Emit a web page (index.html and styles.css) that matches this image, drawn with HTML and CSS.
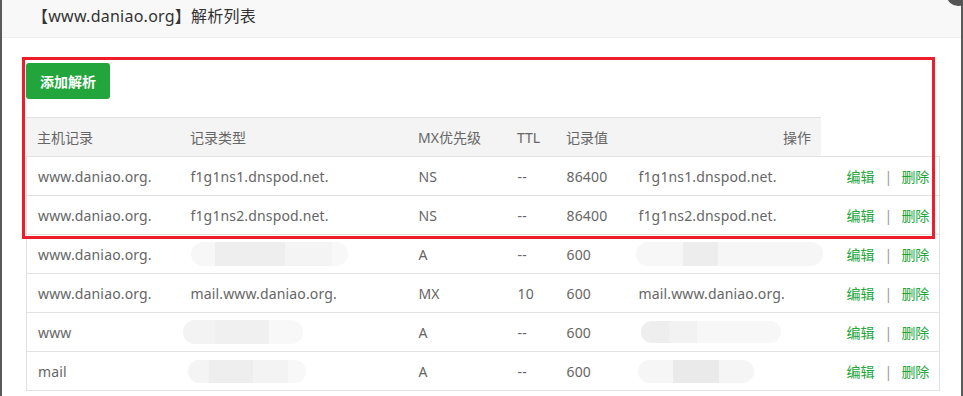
FILE: index.html
```html
<!DOCTYPE html>
<html lang="zh-CN">
<head>
<meta charset="utf-8">
<title>解析列表</title>
<link rel="stylesheet" href="styles.css">
</head>
<body>
<div class="backdrop">
  <div class="modal">
    <div class="modal-head">【www.daniao.org】解析列表</div>
    <div class="modal-body">
      <button class="btn-add">添加解析</button>
      <table class="thead-table">
        <colgroup><col class="c1"><col class="c2"><col class="c3"><col class="c4"><col class="c5h"><col class="c6h"></colgroup>
        <tr><th>主机记录</th><th>记录类型</th><th>MX优先级</th><th>TTL</th><th>记录值</th><th class="right">操作</th></tr>
      </table>
      <table class="tbody-table">
        <colgroup><col class="c1"><col class="c2"><col class="c3"><col class="c4"><col class="c5"><col class="c6"><col class="c7"></colgroup>
        <tr><td>www.daniao.org.</td><td>f1g1ns1.dnspod.net.</td><td>NS</td><td>--</td><td>86400</td><td>f1g1ns1.dnspod.net.</td><td class="ops"><a>编辑</a><span class="sep">|</span><a>删除</a></td></tr>
        <tr><td>www.daniao.org.</td><td>f1g1ns2.dnspod.net.</td><td>NS</td><td>--</td><td>86400</td><td>f1g1ns2.dnspod.net.</td><td class="ops"><a>编辑</a><span class="sep">|</span><a>删除</a></td></tr>
        <tr><td>www.daniao.org.</td><td><span class="blur b1"></span></td><td>A</td><td>--</td><td>600</td><td><span class="blur b2"></span></td><td class="ops"><a>编辑</a><span class="sep">|</span><a>删除</a></td></tr>
        <tr><td>www.daniao.org.</td><td>mail.www.daniao.org.</td><td>MX</td><td>10</td><td>600</td><td>mail.www.daniao.org.</td><td class="ops"><a>编辑</a><span class="sep">|</span><a>删除</a></td></tr>
        <tr><td>www</td><td><span class="blur b3"></span></td><td>A</td><td>--</td><td>600</td><td><span class="blur b4"></span></td><td class="ops"><a>编辑</a><span class="sep">|</span><a>删除</a></td></tr>
        <tr><td>mail</td><td><span class="blur b5"></span></td><td>A</td><td>--</td><td>600</td><td><span class="blur b6"></span></td><td class="ops"><a>编辑</a><span class="sep">|</span><a>删除</a></td></tr>
      </table>
    </div>
    <div class="highlight"></div>
  </div>
  <div class="close-dot"></div>
</div>
</body>
</html>
```
FILE: styles.css
```css
html, body {
  margin: 0;
  padding: 0;
  background: #5a5a5a;
  overflow: hidden;
}
body {
  font-family: "Noto Sans", "Noto Sans CJK SC", sans-serif;
  color: #666;
}
.backdrop {
  position: relative;
  width: 963px;
  height: 396px;
  padding-left: 2px;
  box-sizing: border-box;
}
.modal {
  position: relative;
  width: 959px;
  height: 396px;
  background: #fff;
}
.modal-head {
  height: 38px;
  box-sizing: border-box;
  background: #f8f8f8;
  border-bottom: 1px solid #eee;
  padding: 4px 0 0 30px;
  font-size: 16px;
  line-height: 24px;
  letter-spacing: 0.25px;
  color: #333;
}
.modal-body {
  padding: 25px 0 0 24px;
}
.btn-add {
  display: block;
  width: 84px;
  height: 36px;
  border: 0;
  border-radius: 3px;
  background: #22a63b;
  color: #fff;
  font-family: inherit;
  font-size: 14px;
  font-weight: bold;
  padding: 0;
  margin: 0 0 18px 0;
}
table {
  border-collapse: collapse;
  table-layout: fixed;
  font-size: 14px;
}
.thead-table {
  width: 795px;
  background: #f4f4f4;
  border-top: 1px solid #e2e2e2;
}
.thead-table th {
  font-weight: normal;
  text-align: left;
  height: 38px;
  padding: 0 0 0 11px;
  color: #666;
}
.thead-table th.right {
  text-align: right;
  padding-right: 10px;
}
.tbody-table {
  width: 913px;
  border: 1px solid #e2e2e2;
}
.tbody-table td {
  height: 38px;
  padding: 0 0 0 11px;
  border-top: 1px solid #e2e2e2;
  white-space: nowrap;
  overflow: visible;
  color: #666;
  letter-spacing: 0.15px;
}
col.c1 { width: 153px; }
col.c2 { width: 228px; }
col.c3 { width: 99px; }
col.c4 { width: 49px; }
col.c5 { width: 72px; }
col.c5h { width: 72px; }
col.c6h { width: 194px; }
col.c6 { width: 208px; }
col.c7 { width: 104px; }
.ops a {
  color: #22a63b;
  letter-spacing: 0;
}
.ops .sep {
  color: #999;
  margin: 0 9px 0 10px;
}
.blur {
  display: inline-block;
  vertical-align: middle;
  border-radius: 12px;
  filter: blur(0.6px);
}
.b1 { width: 157px; height: 24px; margin-left: 0; background: linear-gradient(90deg, #f7f7f7 0 15%, #eeeeee 15% 60%, #f4f4f4 60% 90%, #f8f8f8 90%); }
.b2 { width: 187px; height: 24px; margin-left: -3px; background: linear-gradient(90deg, #f7f7f7 0 25%, #ededed 25% 44%, #f6f6f6 44%); }
.b3 { width: 120px; height: 24px; margin-left: -8px; background: linear-gradient(90deg, #f3f3f3 0 27%, #f0f0f0 27% 72%, #f8f8f8 72%); }
.b4 { width: 140px; height: 22px; margin-left: 2px; background: linear-gradient(90deg, #eeeeee 0 20%, #f2f2f2 20% 40%, #f7f7f7 40%); }
.b5 { width: 118px; height: 23px; margin-left: -3px; background: linear-gradient(90deg, #f4f4f4 0 18%, #eeeeee 18% 55%, #f3f3f3 55% 85%, #f8f8f8 85%); }
.b6 { width: 116px; height: 23px; margin-left: -1px; background: linear-gradient(90deg, #f6f6f6 0 30%, #eaeaea 30% 70%, #f5f5f5 70%); }
.highlight {
  position: absolute;
  left: 20px;
  top: 57px;
  width: 913px;
  height: 182px;
  box-sizing: border-box;
  border: 3px solid #ee1d2a;
  pointer-events: none;
}
.close-dot {
  position: absolute;
  right: -6px;
  top: -14px;
  width: 22px;
  height: 20px;
  border-radius: 50%;
  background: #555;
}
```
